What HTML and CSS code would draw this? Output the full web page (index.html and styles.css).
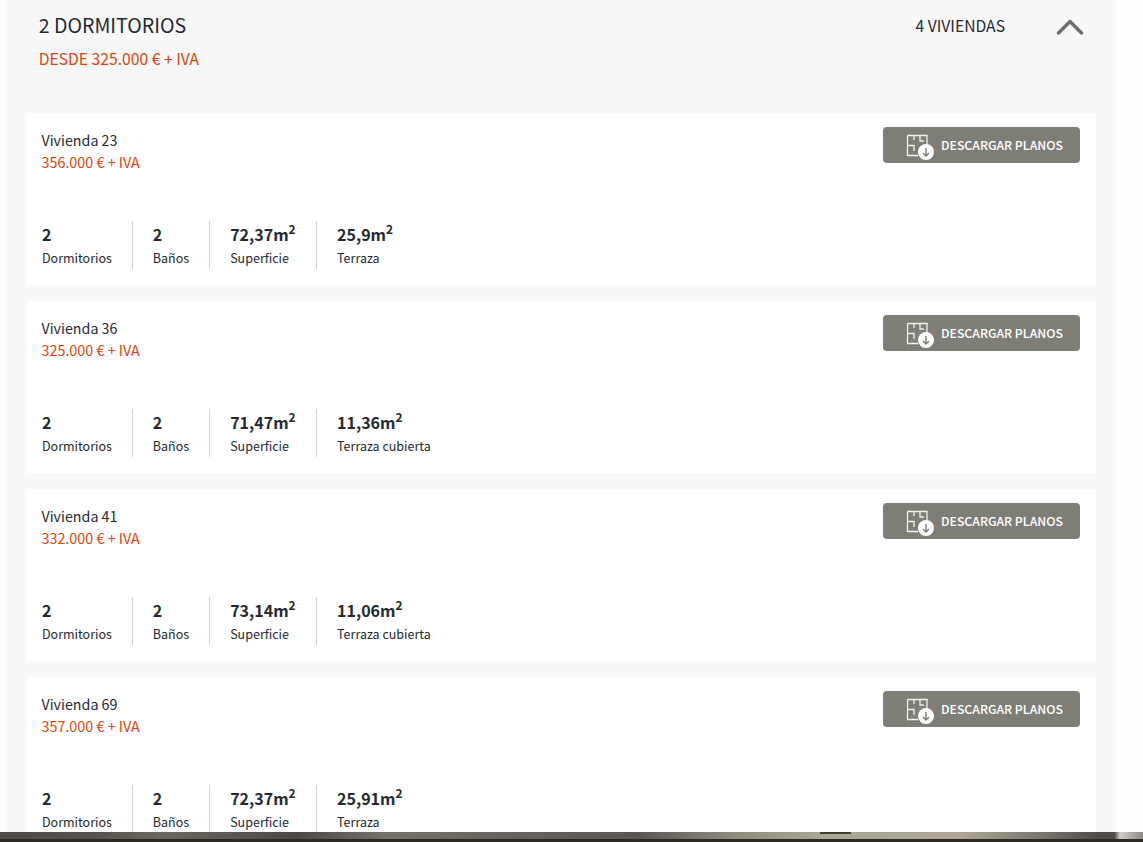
FILE: index.html
```html
<!DOCTYPE html>
<html lang="es">
<head>
<meta charset="utf-8">
<title>2 Dormitorios</title>
<link rel="stylesheet" href="styles.css">
</head>
<body>
<main class="viewport">
  <section class="panel">
    <header class="panel-head">
      <div>
        <h2 class="panel-title">2 DORMITORIOS</h2>
        <p class="panel-price">DESDE 325.000 € + IVA</p>
      </div>
      <div class="panel-side">
        <span class="panel-count">4 VIVIENDAS</span>
        <svg class="chevron" width="28" height="17" viewBox="0 0 28 17"><path d="M2.500 15 L14 3.500 L25.500 15" fill="none" stroke="#6d6d6b" stroke-width="3.400" stroke-linecap="round" stroke-linejoin="round"/></svg>
      </div>
    </header>

    <article class="card">
      <div class="card-top">
        <div><h3 class="card-name">Vivienda 23</h3><p class="card-price">356.000 € + IVA</p></div>
        <a class="btn"><svg class="btn-icon" width="28" height="28" viewBox="0 0 28 28"><path d="M1.500 1.500H21V12M1.500 1.500V21.500H12M1.500 11.500H8V17M8 1.500V6M14 1.500V7H18" fill="none" stroke="#f1f1ee" stroke-width="1.300"/><circle cx="20" cy="18" r="8" fill="#fff"/><path d="M20 14V22M17 19L20 22L23 19" fill="none" stroke="#7f7e76" stroke-width="1.400"/></svg>DESCARGAR PLANOS</a>
      </div>
      <ul class="specs">
        <li class="spec"><b class="spec-val">2</b><span class="spec-lab">Dormitorios</span></li>
        <li class="spec"><b class="spec-val">2</b><span class="spec-lab">Baños</span></li>
        <li class="spec"><b class="spec-val">72,37m<sup>2</sup></b><span class="spec-lab">Superficie</span></li>
        <li class="spec"><b class="spec-val">25,9m<sup>2</sup></b><span class="spec-lab">Terraza</span></li>
      </ul>
    </article>

    <article class="card">
      <div class="card-top">
        <div><h3 class="card-name">Vivienda 36</h3><p class="card-price">325.000 € + IVA</p></div>
        <a class="btn"><svg class="btn-icon" width="28" height="28" viewBox="0 0 28 28"><path d="M1.500 1.500H21V12M1.500 1.500V21.500H12M1.500 11.500H8V17M8 1.500V6M14 1.500V7H18" fill="none" stroke="#f1f1ee" stroke-width="1.300"/><circle cx="20" cy="18" r="8" fill="#fff"/><path d="M20 14V22M17 19L20 22L23 19" fill="none" stroke="#7f7e76" stroke-width="1.400"/></svg>DESCARGAR PLANOS</a>
      </div>
      <ul class="specs">
        <li class="spec"><b class="spec-val">2</b><span class="spec-lab">Dormitorios</span></li>
        <li class="spec"><b class="spec-val">2</b><span class="spec-lab">Baños</span></li>
        <li class="spec"><b class="spec-val">71,47m<sup>2</sup></b><span class="spec-lab">Superficie</span></li>
        <li class="spec"><b class="spec-val">11,36m<sup>2</sup></b><span class="spec-lab">Terraza cubierta</span></li>
      </ul>
    </article>

    <article class="card">
      <div class="card-top">
        <div><h3 class="card-name">Vivienda 41</h3><p class="card-price">332.000 € + IVA</p></div>
        <a class="btn"><svg class="btn-icon" width="28" height="28" viewBox="0 0 28 28"><path d="M1.500 1.500H21V12M1.500 1.500V21.500H12M1.500 11.500H8V17M8 1.500V6M14 1.500V7H18" fill="none" stroke="#f1f1ee" stroke-width="1.300"/><circle cx="20" cy="18" r="8" fill="#fff"/><path d="M20 14V22M17 19L20 22L23 19" fill="none" stroke="#7f7e76" stroke-width="1.400"/></svg>DESCARGAR PLANOS</a>
      </div>
      <ul class="specs">
        <li class="spec"><b class="spec-val">2</b><span class="spec-lab">Dormitorios</span></li>
        <li class="spec"><b class="spec-val">2</b><span class="spec-lab">Baños</span></li>
        <li class="spec"><b class="spec-val">73,14m<sup>2</sup></b><span class="spec-lab">Superficie</span></li>
        <li class="spec"><b class="spec-val">11,06m<sup>2</sup></b><span class="spec-lab">Terraza cubierta</span></li>
      </ul>
    </article>

    <article class="card">
      <div class="card-top">
        <div><h3 class="card-name">Vivienda 69</h3><p class="card-price">357.000 € + IVA</p></div>
        <a class="btn"><svg class="btn-icon" width="28" height="28" viewBox="0 0 28 28"><path d="M1.500 1.500H21V12M1.500 1.500V21.500H12M1.500 11.500H8V17M8 1.500V6M14 1.500V7H18" fill="none" stroke="#f1f1ee" stroke-width="1.300"/><circle cx="20" cy="18" r="8" fill="#fff"/><path d="M20 14V22M17 19L20 22L23 19" fill="none" stroke="#7f7e76" stroke-width="1.400"/></svg>DESCARGAR PLANOS</a>
      </div>
      <ul class="specs">
        <li class="spec"><b class="spec-val">2</b><span class="spec-lab">Dormitorios</span></li>
        <li class="spec"><b class="spec-val">2</b><span class="spec-lab">Baños</span></li>
        <li class="spec"><b class="spec-val">72,37m<sup>2</sup></b><span class="spec-lab">Superficie</span></li>
        <li class="spec"><b class="spec-val">25,91m<sup>2</sup></b><span class="spec-lab">Terraza</span></li>
      </ul>
    </article>
  </section>
</main>
<div class="strip"></div>
</body>
</html>
```

FILE: styles.css
```css
* { box-sizing: border-box; }
html, body { margin: 0; height: 100%; }
body {
  display: flex;
  flex-direction: column;
  height: 842px;
  overflow: hidden;
  background: #fdfdfb;
  color: #252a30;
  font-family: "Noto Sans CJK SC", "Noto Sans", sans-serif;
}
.viewport { flex: 1; min-height: 0; overflow: hidden; padding-left: 6px; }
.panel {
  width: 1110px;
  padding: 0 20px 16px;
  background: #f8f8f8;
}
.panel-head {
  display: flex;
  justify-content: space-between;
  align-items: flex-start;
  height: 113px;
  padding: 13px 12px 0 12.700px;
}
.panel-title { margin: 0; font-size: 19.600px; line-height: 24px; font-weight: 400; }
.panel-price { margin: 10px 0 0; font-size: 15.700px; line-height: 24px; color: #e0450f; }
.panel-side { display: flex; align-items: flex-start; }
.panel-count { font-size: 15.700px; line-height: 26px; margin-right: 51px; }
.chevron { margin-top: 5px; display: block; }
.card {
  height: 172px;
  margin-bottom: 16px;
  padding: 13px 16px 16px 15.500px;
  background: #fff;
  display: flex;
  flex-direction: column;
  justify-content: space-between;
}
.card-top { display: flex; justify-content: space-between; align-items: flex-start; }
.card-name { margin: 3px 0 0; font-size: 14.250px; line-height: 22px; font-weight: 400; }
.card-price { margin: 0; font-size: 14.350px; line-height: 22px; color: #e0450f; }
.btn {
  display: flex;
  align-items: center;
  width: 197px;
  height: 36px;
  margin-top: 1px;
  padding: 0 0 1px 23px;
  border-radius: 4px;
  background: #7f7e76;
  color: #fff;
  font-size: 12.250px;
  font-weight: 500;
}
.btn-icon { display: block; margin: 7px 7px 0 0; flex: none; }
.specs { display: flex; margin: 0; padding: 0; list-style: none; height: 48px; }
.spec {
  display: flex;
  flex-direction: column;
  padding: 0 20px;
  border-left: 1px solid #d3d3d3;
}
.spec:first-child { padding-left: 0.500px; border-left: 0; }
.spec:last-child { padding-left: 20.400px; }
.spec-val { font-size: 16px; line-height: 26px; font-weight: 700; white-space: nowrap; }
.spec-val sup { font-size: 12px; line-height: 0; vertical-align: 7px; }
.spec-lab { font-size: 12.500px; line-height: 22px; white-space: nowrap; }
.strip {
  flex: none;
  height: 10px;
  background:
    linear-gradient(#2b2921, #2b2921) 0 100% / 100% 3px no-repeat,
    linear-gradient(#3f3d38, #3f3d38) 820px 0 / 31px 2px no-repeat,
    linear-gradient(90deg, #4d4c49 0, #55534e 8%, #6a675f 14%, #4b4a47 26%, #75726b 34%, #65635d 44%, #585754 56%, #8e8a7f 64%, #a9a598 72%, #aca799 84%, #7a776f 91%, #4e4d4c 96%, #4e4d4c 97.500%, #cfcdc8 98%, #8c8a84 100%);
}
```
